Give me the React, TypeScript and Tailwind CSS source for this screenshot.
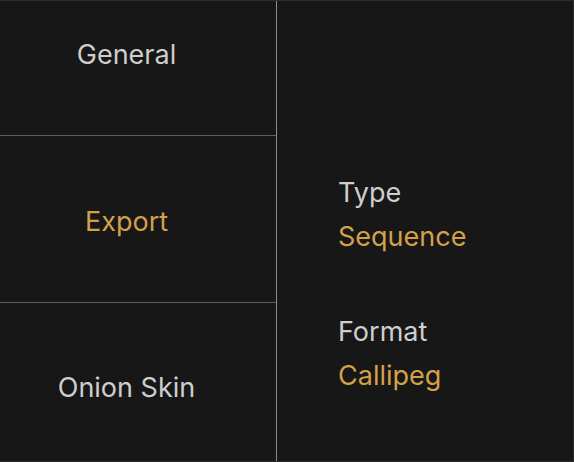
const gold = "text-[#d4a049]";
const light = "text-[#cecece]";

const tabs = [
  { label: "General", active: false, h: "h-[135px] border-b", pt: "pt-[32px]" },
  { label: "Export", active: true, h: "h-[167px] border-b", pt: "pt-[64px]" },
  { label: "Onion Skin", active: false, h: "flex-1", pt: "pt-[63px]" },
];

const fields = [
  { name: "Type", value: "Sequence" },
  { name: "Format", value: "Callipeg" },
];

export default function App() {
  return (
    <div
      className="w-[574px] h-[462px] bg-[#171717] border-t border-r border-b border-[#2c2c2c] flex text-[27px] leading-[44px]"
      style={{ fontFamily: "Inter, 'Noto Sans', sans-serif" }}
    >
      <div className="w-[277px] border-r border-[#8a8a8a] flex flex-col">
        {tabs.map((t) => (
          <div
            key={t.label}
            className={`${t.h} ${t.pt} border-[#5e5e5e] flex justify-center pr-[23px]`}
          >
            <span className={t.active ? gold : light}>{t.label}</span>
          </div>
        ))}
      </div>
      <div className="flex-1 pl-[61px] pt-[170px] flex flex-col gap-[51px]">
        {fields.map((f) => (
          <div key={f.name} className="flex flex-col">
            <span className={light}>{f.name}</span>
            <span className={gold}>{f.value}</span>
          </div>
        ))}
      </div>
    </div>
  );
}
